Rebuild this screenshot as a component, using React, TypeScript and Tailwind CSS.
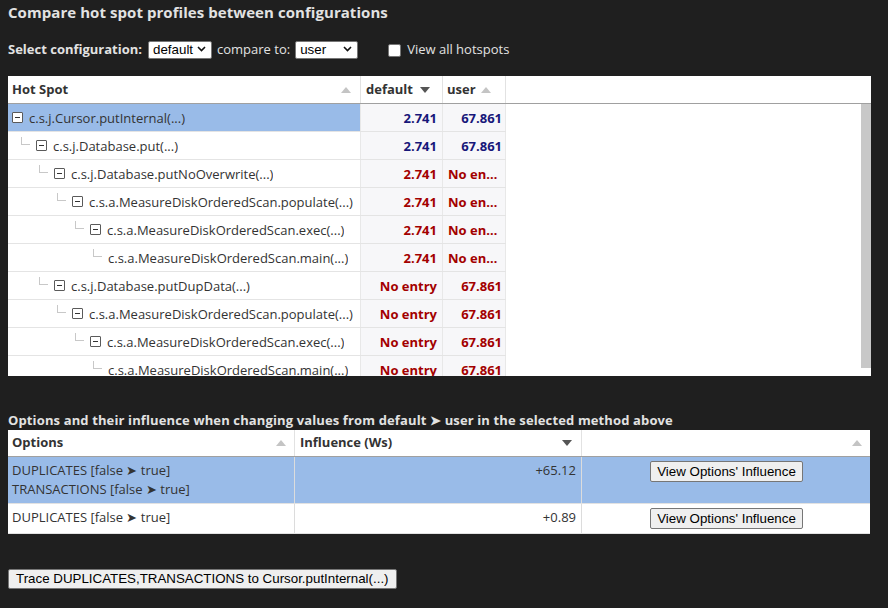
import React from 'react';

const NAVY = 'text-[#17177a]';
const RED = 'text-[#a30000]';

type Row = {
  lvl: number;
  box: boolean;
  name: string;
  d: string;
  u: string;
  dRed: boolean;
  uRed: boolean;
  sel?: boolean;
};

const rows: Row[] = [
  { lvl: 0, box: true, name: 'c.s.j.Cursor.putInternal(...)', d: '2.741', u: '67.861', dRed: false, uRed: false, sel: true },
  { lvl: 1, box: true, name: 'c.s.j.Database.put(...)', d: '2.741', u: '67.861', dRed: false, uRed: false },
  { lvl: 2, box: true, name: 'c.s.j.Database.putNoOverwrite(...)', d: '2.741', u: 'No entry', dRed: true, uRed: true },
  { lvl: 3, box: true, name: 'c.s.a.MeasureDiskOrderedScan.populate(...)', d: '2.741', u: 'No entry', dRed: true, uRed: true },
  { lvl: 4, box: true, name: 'c.s.a.MeasureDiskOrderedScan.exec(...)', d: '2.741', u: 'No entry', dRed: true, uRed: true },
  { lvl: 5, box: false, name: 'c.s.a.MeasureDiskOrderedScan.main(...)', d: '2.741', u: 'No entry', dRed: true, uRed: true },
  { lvl: 2, box: true, name: 'c.s.j.Database.putDupData(...)', d: 'No entry', u: '67.861', dRed: true, uRed: true },
  { lvl: 3, box: true, name: 'c.s.a.MeasureDiskOrderedScan.populate(...)', d: 'No entry', u: '67.861', dRed: true, uRed: true },
  { lvl: 4, box: true, name: 'c.s.a.MeasureDiskOrderedScan.exec(...)', d: 'No entry', u: '67.861', dRed: true, uRed: true },
  { lvl: 5, box: false, name: 'c.s.a.MeasureDiskOrderedScan.main(...)', d: 'No entry', u: '67.861', dRed: true, uRed: true },
];

function Up() {
  return (
    <svg width="10" height="6" viewBox="0 0 10 6" className="shrink-0">
      <path d="M0 6 L5 0 L10 6Z" fill="#c4c4c4" />
    </svg>
  );
}

function Down() {
  return (
    <svg width="10" height="6" viewBox="0 0 10 6" className="shrink-0">
      <path d="M0 0 L10 0 L5 6Z" fill="#555" />
    </svg>
  );
}

function Chevron() {
  return (
    <svg width="9" height="6" viewBox="0 0 9 6" className="pointer-events-none absolute right-[6px] top-[6px]">
      <path d="M1 1 L4.5 4.5 L8 1" fill="none" stroke="#111" strokeWidth="1.6" />
    </svg>
  );
}

function MinusBox() {
  return (
    <span className="flex h-[11px] w-[11px] shrink-0 items-center justify-center rounded-[1px] border border-[#5a5a5a] bg-white">
      <span className="h-px w-[5px] bg-[#333]" />
    </span>
  );
}

function Select({ value, w }: { value: string; w: string }) {
  return (
    <span className={`relative inline-block ${w}`}>
      <select
        defaultValue={value}
        className="h-[18px] w-full appearance-none rounded-[2px] border border-[#767676] bg-white pl-[4px] font-['Liberation_Sans'] text-[13.333px] leading-[16px] text-black"
      >
        <option>{value}</option>
      </select>
      <Chevron />
    </span>
  );
}

function HotSpotTable() {
  return (
    <div className="mt-[17px] h-[300px] w-[863px] overflow-hidden bg-white text-[13px] text-[#333]">
      {/* header */}
      <div className="flex h-[28px] border-b border-[#a0a0a0] font-bold">
        <div className="flex w-[353px] items-center justify-between border-r border-[#e2e2e2] pl-[4px] pr-[9px]">
          <span>Hot Spot</span>
          <Up />
        </div>
        <div className="flex w-[82px] items-center gap-[7px] border-r border-[#e2e2e2] pl-[5px]">
          <span>default</span>
          <Down />
        </div>
        <div className="flex w-[63px] items-center gap-[5px] border-r border-[#e2e2e2] pl-[4px]">
          <span>user</span>
          <Up />
        </div>
        <div className="flex-1" />
      </div>
      {/* body */}
      <div className="flex h-[272px]">
        <div className="w-[498px]">
          {rows.map((r, i) => (
            <div key={i} className="flex h-[28px] border-b border-[#e4e4e4] leading-[28px]">
              <div
                className={`flex w-[353px] items-center border-r border-[#e8e8e8] pl-[4px] ${r.sel ? 'bg-[#99bbe8]' : ''}`}
              >
                {r.lvl > 0 && (
                  <>
                    <span className="shrink-0" style={{ width: (r.lvl - 1) * 18 + 9 }} />
                    <span className="mb-[9px] h-[8px] w-[9px] shrink-0 border-b border-l border-[#c8c8c8]" />
                    <span className="w-[6px] shrink-0" />
                  </>
                )}
                {r.box && <MinusBox />}
                <span className={`${r.box ? 'ml-[6px]' : ''} truncate`}>{r.name}</span>
              </div>
              <div
                className={`w-[82px] truncate border-r border-[#e8e8e8] bg-[#f7f7f9] pl-[5px] pr-[5px] text-right font-bold ${r.dRed ? RED : NAVY}`}
              >
                {r.d}
              </div>
              <div
                className={`w-[63px] truncate border-r border-[#e8e8e8] bg-[#f7f7f9] pl-[5px] pr-[3px] text-right font-bold ${r.uRed ? RED : NAVY}`}
              >
                {r.u}
              </div>
            </div>
          ))}
        </div>
        <div className="flex-1" />
        <div className="w-[10px]">
          <div className="h-[264px] bg-[#c8c8c8]" />
        </div>
      </div>
    </div>
  );
}

const options = [
  { lines: ['DUPLICATES [false ➤ true]', 'TRANSACTIONS [false ➤ true]'], v: '+65.12', sel: true },
  { lines: ['DUPLICATES [false ➤ true]'], v: '+0.89', sel: false },
];

function OptionsTable() {
  return (
    <div className="mt-[1px] w-[862px] bg-white text-[13px] text-[#333]">
      <div className="flex h-[27px] border-b border-[#a0a0a0] font-bold">
        <div className="flex w-[287px] items-center justify-between border-r border-[#e2e2e2] pl-[4px] pr-[8px]">
          <span>Options</span>
          <Up />
        </div>
        <div className="flex w-[287px] items-center justify-between border-r border-[#e2e2e2] pl-[5px] pr-[9px]">
          <span>Influence (Ws)</span>
          <Down />
        </div>
        <div className="flex flex-1 items-center justify-end pr-[8px]">
          <Up />
        </div>
      </div>
      {options.map((o, i) => (
        <div
          key={i}
          className={`flex border-b border-[#e2e2e2] ${o.sel ? 'bg-[#99bbe8]' : ''}`}
        >
          <div className="w-[287px] border-r border-[#dcdcdc] py-[4px] pl-[4px] leading-[19px]">
            {o.lines.map(l => (
              <div key={l}>{l}</div>
            ))}
          </div>
          <div className="w-[287px] border-r border-[#dcdcdc] py-[4px] pr-[5px] text-right leading-[19px]">
            {o.v}
          </div>
          <div className="flex flex-1 justify-center py-[4px] pl-[1px]">
            <button className="h-[21px] rounded-[2px] border border-[#767676] bg-[#efefef] px-[6px] font-['Liberation_Sans'] text-[13.333px] leading-[19px] text-black">
              View Options' Influence
            </button>
          </div>
        </div>
      ))}
    </div>
  );
}

export default function App() {
  return (
    <div className="min-h-[608px] bg-[#1f1f1f] px-[8px] pt-[2px] font-['Open_Sans',sans-serif] text-[#e2e2e2]">
      <h1 className="text-[15px] font-bold leading-[20px] tracking-[0.06px]">
        Compare hot spot profiles between configurations
      </h1>

      <div className="mt-[19px] flex h-[18px] items-center text-[13px]">
        <span className="font-bold">Select configuration:</span>
        <span className="ml-[6px]">
          <Select value="default" w="w-[64px]" />
        </span>
        <span className="ml-[5px]">compare to:</span>
        <span className="ml-[5px]">
          <Select value="user" w="w-[63px]" />
        </span>
        <span className="ml-[30px] h-[13px] w-[13px] rounded-[2px] border border-[#767676] bg-white" />
        <span className="ml-[6px]">View all hotspots</span>
      </div>

      <HotSpotTable />

      <div className="mt-[35px] text-[13px] font-bold leading-[18px] tracking-[0.13px]">
        Options and their influence when changing values from default ➤ user in the selected method above
      </div>

      <OptionsTable />

      <button className="mt-[35px] h-[20px] rounded-[2px] border border-[#767676] bg-[#efefef] px-[7px] font-['Liberation_Sans'] text-[13.333px] leading-[18px] text-black">
        Trace DUPLICATES,TRANSACTIONS to Cursor.putInternal(...)
      </button>
    </div>
  );
}
